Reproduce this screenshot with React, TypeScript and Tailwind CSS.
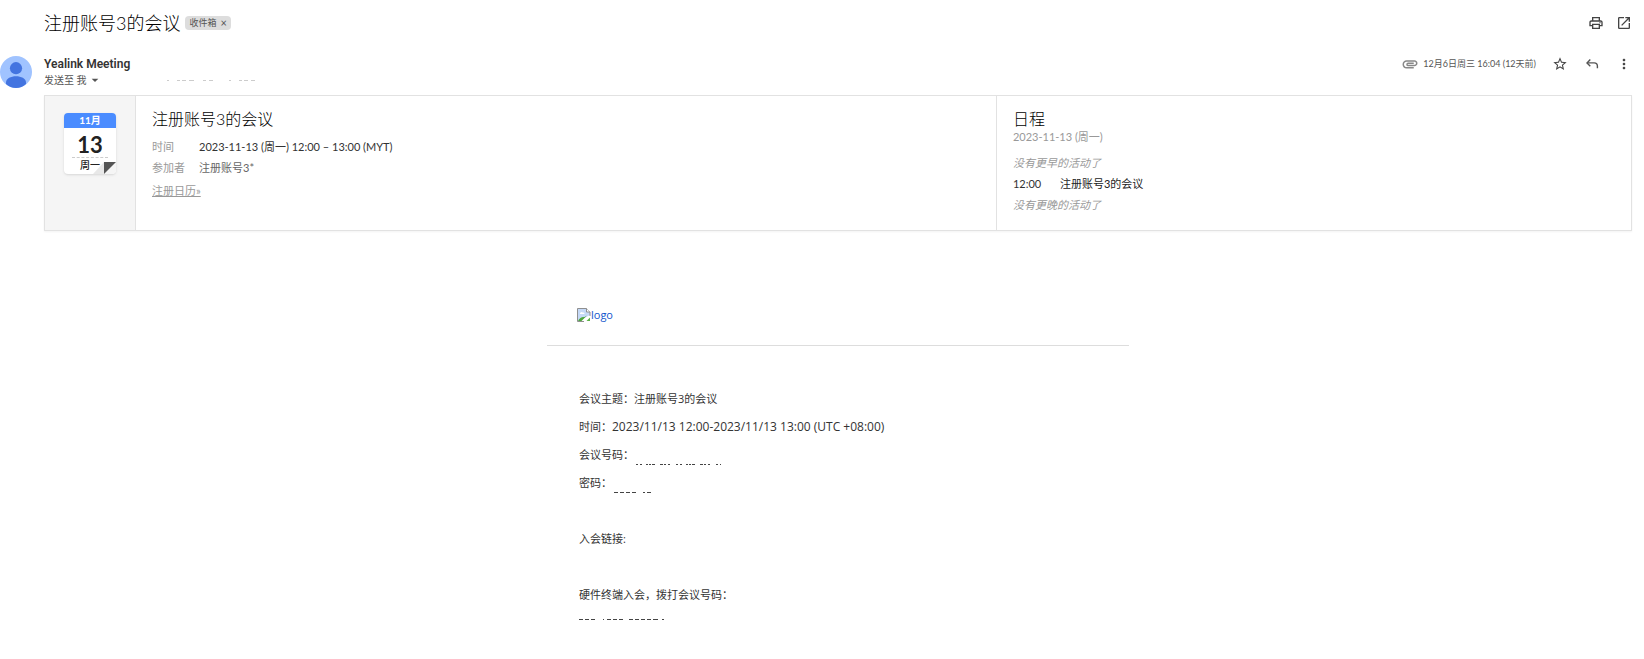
import {
  MdArrowDropDown,
  MdAttachment,
  MdMoreVert,
  MdOpenInNew,
  MdOutlinePrint,
  MdStarBorder,
} from "react-icons/md";

type Line = {
  label: string;
  value?: string;
  latin?: string;
  hidden?: { dashes: string; width: number };
};

const lines: Line[] = [
  { label: "会议主题：", value: "注册账号3的会议" },
  { label: "时间：", latin: "2023/11/13 12:00-2023/11/13 13:00 (UTC +08:00)" },
  {
    label: "会议号码：",
    hidden: { dashes: "2 2 2 4 2 1 2 1 3 5 3 1 2 2 2 6", width: 85 },
  },
  { label: "密码：", hidden: { dashes: "4 2 4 2 4 2 4 7 2 2 4 9", width: 37 } },
  { label: "" },
  { label: "入会链接:" },
  { label: "" },
  { label: "硬件终端入会，拨打会议号码：" },
];

// what is left of a value after it was wiped out
function Residue({
  dashes,
  width,
  color = "#444",
}: {
  dashes: string;
  width: number;
  color?: string;
}) {
  return (
    <svg width={width} height="1" aria-hidden="true">
      <line x1="0" y1="0.5" x2={width} y2="0.5" stroke={color} strokeDasharray={dashes} />
    </svg>
  );
}

function Avatar() {
  return (
    <svg width="32" height="32" viewBox="0 0 32 32" className="shrink-0" aria-hidden="true">
      <circle cx="16" cy="16" r="16" fill="#a0c3ff" />
      <circle cx="16" cy="12.2" r="6.1" fill="#4374e0" />
      <path
        d="M6 26.2C6 22.4 11 20.2 16 20.2s10 2.2 10 6v1.7A16 16 0 0 1 16 32 16 16 0 0 1 6 28z"
        fill="#4374e0"
      />
    </svg>
  );
}

function ReplyIcon() {
  return (
    <svg width="16" height="16" viewBox="0 0 16 16" fill="none" stroke="#555" strokeWidth="1.4">
      <path d="M6.3 3.6 3 6.9l3.3 3.3" />
      <path d="M3 6.9h7.2c2 0 3.2 1.3 3.2 3.2v2.2" />
    </svg>
  );
}

function BrokenImage() {
  return (
    <svg width="14" height="14" viewBox="0 0 14 14" aria-hidden="true">
      <path d="M.5 13.5V.5h9l3.5 3.5v3" fill="#c5d9f7" stroke="#8f8f8f" />
      <path d="M9.5.5V4H13" fill="#fff" stroke="#8f8f8f" />
      <path d="M3 5.5a1.5 1.5 0 0 1 2.6-.9A1.3 1.3 0 0 1 7.5 6H3z" fill="#fff" />
      <path d="M1 13c1.5-3 4-4.5 6.5-4L10 7.5 4.5 13z" fill="#4fa83d" />
      <path d="M13 7.5V13H7z" fill="#fff" />
      <path d="M.5 13.5H7M13 7v1" stroke="#8f8f8f" />
      <path d="M9.5 13 13 9.5V13z" fill="#5bb046" />
    </svg>
  );
}

function CalendarTile() {
  return (
    <div className="relative h-[61px] w-[52px] overflow-hidden rounded-sm bg-white text-center text-[#222] shadow-sm">
      <div className="bg-[#4a8cff] text-[10px] leading-[15px] font-bold text-white">11月</div>
      <div className="pt-[5px] text-[22px] leading-6 font-bold">13</div>
      <div className="mx-2 border-t border-dashed border-[#ccc]" />
      <div className="text-[10px] leading-[14px] font-medium">周一</div>
      <svg className="absolute right-0 bottom-0" width="23" height="12" viewBox="0 0 23 12">
        <path d="M0 12 11 0v12z" fill="#e8e8e8" />
        <path d="M11 12h12V0z" fill="#f5f5f5" />
        <path d="M11 0h12L11 12z" fill="#555" />
      </svg>
    </div>
  );
}

export default function App() {
  return (
    <main className="bg-white pr-3 font-['Lato','Noto_Sans_CJK_SC',sans-serif] text-[11px] text-[#333]">
      <header className="flex h-[45px] items-center pl-11">
        <h1 className="text-lg font-light text-black">注册账号3的会议</h1>
        <span className="ml-[5px] flex h-[14px] items-center gap-1 rounded-sm bg-[#ddd] px-1 text-[9px] text-[#555]">
          收件箱
          <button type="button" aria-label="移除标签" className="text-[11px] leading-none">
            ×
          </button>
        </span>
        <div className="ml-auto flex gap-3 text-[#444]">
          <button type="button" aria-label="打印">
            <MdOutlinePrint size={16} />
          </button>
          <button type="button" aria-label="在新窗口中打开">
            <MdOpenInNew size={16} />
          </button>
        </div>
      </header>

      <section className="mt-[11px] flex items-start">
        <Avatar />
        <div className="ml-3">
          <p className="font-['Roboto',sans-serif] text-xs font-semibold text-[#333]">Yealink Meeting</p>
          <div className="flex h-4 items-center text-[10px] text-[#555]">
            <button type="button" aria-label="显示详细信息" className="flex items-center">
              发送至 我
              <MdArrowDropDown size={16} />
            </button>
            <span className="ml-16 flex">
              <Residue dashes="2 8 3 2 4 3 5 9 3 3 4 16" width={88} color="#ccc" />
            </span>
          </div>
        </div>
        <div className="ml-auto flex h-4 items-center text-[9px] text-[#555]">
          <MdAttachment size={18} className="mr-1 text-[#888]" />
          <time>12月6日周三 16:04 (12天前)</time>
          <div className="ml-4 flex gap-4 text-[#444]">
            <button type="button" aria-label="加星标">
              <MdStarBorder size={16} />
            </button>
            <button type="button" aria-label="回复">
              <ReplyIcon />
            </button>
            <button type="button" aria-label="更多">
              <MdMoreVert size={16} />
            </button>
          </div>
        </div>
      </section>

      <section className="mt-[7px] ml-11 flex border border-[#e2e2e2] shadow-xs">
        <div className="flex w-[91px] shrink-0 justify-center border-r border-[#e2e2e2] bg-[#f5f5f5] pt-[17px]">
          <CalendarTile />
        </div>
        <div className="flex-[11] px-4 pt-[13px]">
          <h2 className="text-base leading-5 font-light text-black">注册账号3的会议</h2>
          <dl className="mt-[7px] grid grid-cols-[47px_1fr] leading-[21px]">
            <dt className="text-[#999]">时间</dt>
            <dd>2023-11-13 (周一) 12:00 – 13:00 (MYT)</dd>
            <dt className="text-[#999]">参加者</dt>
            <dd className="text-[#666]">注册账号3*</dd>
          </dl>
          <a href="#calendar" className="mt-[2px] inline-block leading-[21px] text-[#999] underline">
            注册日历»
          </a>
        </div>
        <div className="flex-[8] border-l border-[#e2e2e2] px-4 pt-[13px] pb-[15px]">
          <h2 className="text-base leading-5 font-light text-black">日程</h2>
          <p className="leading-4 text-[#999]">2023-11-13 (周一)</p>
          <div className="mt-[7px] leading-[21px]">
            <p className="text-[#999] italic">没有更早的活动了</p>
            <p className="grid grid-cols-[47px_1fr]">
              <span>12:00</span>
              <span className="text-[#222]">注册账号3的会议</span>
            </p>
            <p className="text-[#999] italic">没有更晚的活动了</p>
          </div>
        </div>
      </section>

      <article className="mt-[69px] ml-11 flex flex-col items-center font-['Open_Sans','Noto_Sans_CJK_SC',sans-serif]">
        <div className="w-full max-w-[582px]">
          <div className="border-b border-[#ddd] px-[30px] pt-[7px] pb-[21px]">
            <a href="#logo" className="flex items-center text-[#1155cc]">
              <BrokenImage />
              logo
            </a>
          </div>
          <div className="px-8 pt-[39px] text-[#333]">
            {lines.map((line, i) => (
              <p key={i} className="flex h-7 items-end leading-7">
                {line.label}
                {line.value}
                {line.latin && <span className="text-xs leading-7">{line.latin}</span>}
                {line.hidden && (
                  <span className="mb-1 ml-[2px] flex">
                    <Residue dashes={line.hidden.dashes} width={line.hidden.width} />
                  </span>
                )}
              </p>
            ))}
            <p className="flex h-7 pt-[10px]">
              <Residue dashes="4 2 4 2 4 8 1 3 4 2 4 2 4 6 4 2 4 2 4 2 4 2 5" width={85} />
            </p>
          </div>
        </div>
      </article>
    </main>
  );
}
